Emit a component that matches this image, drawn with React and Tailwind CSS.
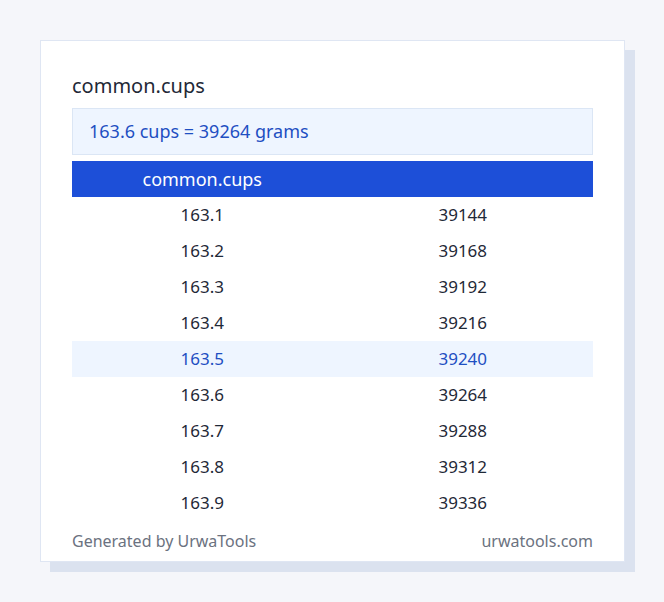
export default function App() {
  const rows = [
    ["163.1", "39144"], ["163.2", "39168"], ["163.3", "39192"], ["163.4", "39216"],
    ["163.5", "39240"], ["163.6", "39264"], ["163.7", "39288"], ["163.8", "39312"], ["163.9", "39336"],
  ];
  return (
    <div className="w-[664px] h-[602px] bg-[#f5f6fa] pt-[40px] pl-[40px]" style={{ fontFamily: '"Noto Sans", sans-serif' }}>
      <div className="relative w-[585px] h-[522px]">
        <div className="absolute left-[10px] top-[10px] w-[585px] h-[522px] bg-[#dbe2ef]" />
        <div className="relative w-[585px] h-[522px] bg-white border border-[#dfe6f3] pt-[31px] px-[31px] pb-2 flex flex-col">
          <div className="text-[20px] leading-[28px] text-[#1f2937] h-[28px]">common.cups</div>
          <div className="mt-2 h-[48px] bg-[#eef5ff] border border-[#dbe6f5] flex items-center px-4 text-[18px] text-[#1e4fc2]">163.6 cups = 39264 grams</div>
          <div className="mt-[6px]">
            <div className="grid grid-cols-2 h-[36px] bg-[#1d4fd8] text-white text-[18px] items-center">
              <div className="text-center">common.cups</div>
              <div />
            </div>
            {rows.map((r, i) => (
              <div key={i} className={`grid grid-cols-2 h-[36px] items-center text-[17px] ${i === 4 ? "bg-[#eef5ff] text-[#1e4fc2]" : "text-[#1f2937]"}`}>
                <div className="text-center">{r[0]}</div>
                <div className="text-center">{r[1]}</div>
              </div>
            ))}
          </div>
          <div className="mt-2 flex justify-between text-[16px] leading-[24px] text-[#6b7280]">
            <span>Generated by UrwaTools</span>
            <span>urwatools.com</span>
          </div>
        </div>
      </div>
    </div>
  );
}
